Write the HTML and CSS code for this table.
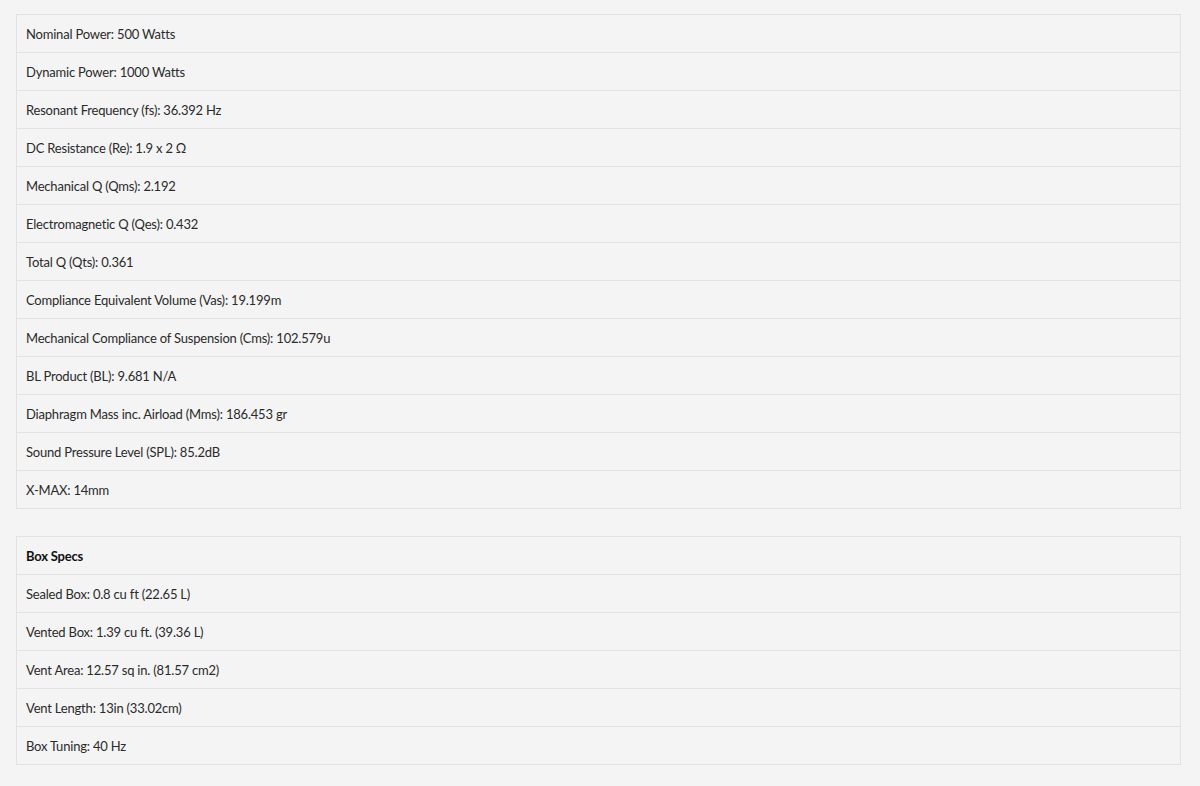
FILE: index.html
```html
<!DOCTYPE html>
<html>
<head>
<meta charset="utf-8">
<link rel="stylesheet" href="styles.css">
</head>
<body>
<div class="page">
  <table class="specs">
    <tbody>
      <tr><td>Nominal Power: 500 Watts</td></tr>
      <tr><td>Dynamic Power: 1000 Watts</td></tr>
      <tr><td>Resonant Frequency (fs): 36.392 Hz</td></tr>
      <tr><td>DC Resistance (Re): 1.9 x 2 Ω</td></tr>
      <tr><td>Mechanical Q (Qms): 2.192</td></tr>
      <tr><td>Electromagnetic Q (Qes): 0.432</td></tr>
      <tr><td>Total Q (Qts): 0.361</td></tr>
      <tr><td>Compliance Equivalent Volume (Vas): 19.199m</td></tr>
      <tr><td>Mechanical Compliance of Suspension (Cms): 102.579u</td></tr>
      <tr><td>BL Product (BL): 9.681 N/A</td></tr>
      <tr><td>Diaphragm Mass inc. Airload (Mms): 186.453 gr</td></tr>
      <tr><td>Sound Pressure Level (SPL): 85.2dB</td></tr>
      <tr><td>X-MAX: 14mm</td></tr>
    </tbody>
  </table>
  <table class="specs">
    <thead>
      <tr><th>Box Specs</th></tr>
    </thead>
    <tbody>
      <tr><td>Sealed Box: 0.8 cu ft (22.65 L)</td></tr>
      <tr><td>Vented Box: 1.39 cu ft. (39.36 L)</td></tr>
      <tr><td>Vent Area: 12.57 sq in. (81.57 cm2)</td></tr>
      <tr><td>Vent Length: 13in (33.02cm)</td></tr>
      <tr><td>Box Tuning: 40 Hz</td></tr>
    </tbody>
  </table>
</div>
</body>
</html>
```
FILE: styles.css
```css
html, body {
  margin: 0;
  padding: 0;
  background: #f4f4f4;
}
.page {
  padding: 14px 19px 0 16px;
  display: flex;
  flex-direction: column;
  gap: 27px;
  font-family: "Lato", "Liberation Sans", sans-serif;
  font-size: 13px;
  letter-spacing: -0.2px;
  color: #2a2a2a;
}
.specs {
  width: 1165px;
  border-collapse: collapse;
  border: 1px solid #e2e2e2;
}
.specs td,
.specs th {
  height: 38px;
  padding: 1px 9px 0;
  border-bottom: 1px solid #e2e2e2;
  text-align: left;
  vertical-align: middle;
  line-height: 16px;
  box-sizing: border-box;
}
.specs th {
  font-weight: 700;
  color: #111111;
}
```
